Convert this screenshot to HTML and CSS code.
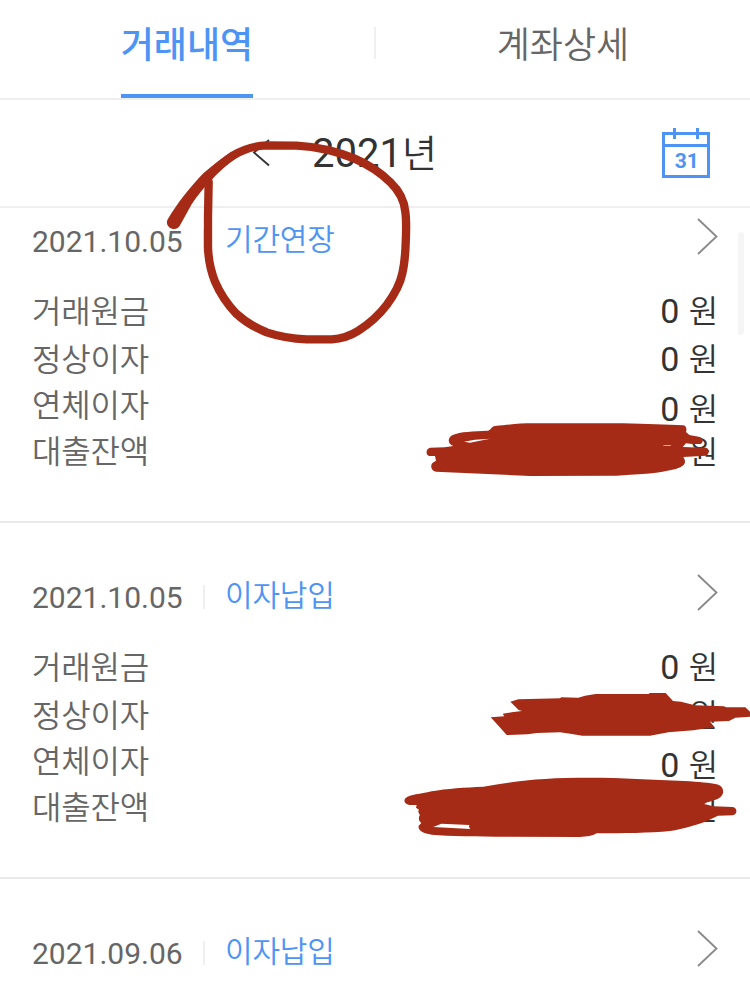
FILE: index.html
```html
<!DOCTYPE html>
<html lang="ko">
<head>
  <meta charset="UTF-8">
  <title>거래내역</title>
  <meta name="viewport" content="width=device-width, initial-scale=1.0">
  <link rel="stylesheet" href="styles.css">
</head>
<body>

  <nav class="tabs">
    <div class="tab"><span class="tab-label active">거래내역</span></div>
    <div class="tab-line"></div>
    <div class="tab"><span class="tab-label">계좌상세</span></div>
  </nav>

  <div class="year-bar">
    <svg class="prev" width="20" height="30" viewBox="0 0 20 30"><path d="M18 2L3 14.5L18 27.5"/></svg>
    <div class="year">2021<span class="year-unit">년</span></div>
    <svg class="calendar" width="48" height="50" viewBox="0 0 48 50">
      <path d="M1.5 5.5H46.5V48.5H1.5ZM1.5 17.5H46.5M12.5 0V11M35.5 0V11"/>
      <text x="24.7" y="40">31</text>
    </svg>
  </div>

  <main class="list">
    <section class="item first">
      <div class="item-head">
        <span class="date">2021.10.05</span>
        <span class="divider"></span>
        <span class="type">기간연장</span>
        <svg class="next" width="22" height="38" viewBox="0 0 22 38"><path d="M2 2L20.5 19.5L2 37"/></svg>
      </div>
      <div class="item-body">
        <div class="labels">
          <span>거래원금</span>
          <span>정상이자</span>
          <span>연체이자</span>
          <span>대출잔액</span>
        </div>
        <div class="amounts">
          <span><b>0</b> 원</span>
          <span><b>0</b> 원</span>
          <span class="low"><b>0</b> 원</span>
          <span>원</span>
        </div>
      </div>
    </section>

    <section class="item">
      <div class="item-head">
        <span class="date">2021.10.05</span>
        <span class="divider"></span>
        <span class="type">이자납입</span>
        <svg class="next" width="22" height="38" viewBox="0 0 22 38"><path d="M2 2L20.5 19.5L2 37"/></svg>
      </div>
      <div class="item-body">
        <div class="labels">
          <span>거래원금</span>
          <span>정상이자</span>
          <span>연체이자</span>
          <span>대출잔액</span>
        </div>
        <div class="amounts">
          <span><b>0</b> 원</span>
          <span>원</span>
          <span class="low"><b>0</b> 원</span>
          <span>원</span>
        </div>
      </div>
    </section>

    <section class="item last">
      <div class="item-head">
        <span class="date">2021.09.06</span>
        <span class="divider"></span>
        <span class="type">이자납입</span>
        <svg class="next" width="22" height="38" viewBox="0 0 22 38"><path d="M2 2L20.5 19.5L2 37"/></svg>
      </div>
    </section>
  </main>

  <div class="scrollbar"></div>

  <!-- red pen marks -->
  <svg class="marks" width="750" height="996" viewBox="0 0 750 996">
    <!-- circle round the first type -->
    <g transform="translate(150 120) scale(.33333)">
      <path class="pen" d="M176 186L174 290V380C175 425 184 457 195 485C207 513 232 553 258 580C286 606 320 625 350 637C380 647 422 656 470 658H545C575 656 600 648 625 632C660 610 688 584 710 555C732 525 750 495 757 460C764 430 766 400 767 370C769 330 770 305 766 276C763 240 748 213 721 187C690 156 655 134 614 116C555 92 500 80 440 77L350 76C310 78 280 88 250 106C225 122 200 144 175 167"/>
      <path d="M52 300C85 245 115 208 160 160C190 134 215 114 244 96L256 117C230 133 205 157 185 180C160 203 142 228 125 253L91 314C87 323 79 328 69 327C55 324 48 313 52 300Z"/>
    </g>
    <g transform="translate(410 400) scale(.33333)">
      <path fill-rule="evenodd" d="M60 143L104 142L130 138C113 133 111 113 128 105C150 94 190 95 233 92C243 91 244 79 255 78C300 73 330 70 370 70L640 70C710 71 770 75 820 76C829 78 831 87 828 96L838 105L866 110C880 111 882 128 871 132L846 132L828 130L818 141L888 143C899 145 899 164 888 167L820 171C823 177 826 181 825 187C823 198 809 204 794 208C745 220 700 223 620 227L360 228L78 215C61 212 59 191 72 186L78 182L75 168L58 168C46 165 47 146 60 143ZM162 125L180 128L240 116L195 119ZM760 136L782 136L782 138L760 137Z"/>
    </g>
    <g transform="translate(390 640) scale(.33333)">
      <path d="M361 185L385 178L510 175L514 172L565 173L585 167L617 162L775 162L780 159L827 159L849 183L873 185L915 196L1002 199L1008 202L1066 202L1080 215V230L1036 233L1017 243L960 245L973 260L970 264L950 265L910 271L835 277L780 287L577 287L541 281L510 277L440 279L413 283L350 285L326 258L302 232L343 229L338 221L365 217L396 213L386 210Z"/>
      <path fill-rule="evenodd" d="M47 474C60 464 90 462 125 454C170 445 225 443 280 440C340 430 400 420 465 417C550 412 660 413 740 417L900 424C940 427 970 430 987 435C1000 441 1003 457 995 467C986 480 960 483 940 491L970 499L1028 501C1043 504 1043 523 1028 526L984 527L957 540C930 553 880 567 840 573C780 579 700 580 620 580C607 588 590 590 570 591L350 590C260 589 180 589 125 584C98 580 83 571 86 557L94 549C86 544 84 532 90 525C84 517 84 511 87 509L78 503L80 495L58 495C42 492 40 481 47 474ZM130 561L154 551L238 555L237 561L241 567Z"/>
    </g>
  </svg>

</body>
</html>
```
FILE: styles.css
```css
body {
  margin: 0;
  height: 996px;
  position: relative;
  overflow: hidden;
  background: #fff;
  color: #666;
  font-family: Roboto, "Noto Sans CJK KR", sans-serif;
}

svg {
  display: block;
}

/* tabs */
.tabs {
  display: flex;
  height: 98px;
  border-bottom: 2px solid #efefef;
}

.tab {
  flex: 1;
  display: flex;
  justify-content: center;
}

.tab-label {
  box-sizing: border-box;
  height: 98px;
  font-size: 36px;
  font-weight: 350;
  line-height: 92px;
}

.tab-label.active {
  color: #4e94f4;
  font-weight: 500;
  border-bottom: 4px solid #4e94f4;
}

.tab-line {
  width: 2px;
  height: 32px;
  margin-top: 27px;
  background: #efefef;
}

/* year */
.year-bar {
  display: flex;
  align-items: flex-start;
  height: 106px;
  padding: 0 40px 0 251px;
  border-bottom: 2px solid #efefef;
}

.prev {
  margin-top: 38px;
  fill: none;
  stroke: #333;
  stroke-width: 1.8;
}

.year {
  margin-left: 41px;
  color: #333;
  font-size: 40px;
  line-height: 108px;
}

.year-unit {
  font-size: 38px;
  font-weight: 350;
}

.calendar {
  margin: 28px 0 0 auto;
  fill: none;
  stroke: #4e94f4;
  stroke-width: 3;
}

.calendar text {
  fill: #4e94f4;
  stroke: none;
  font-size: 21px;
  font-weight: 700;
  text-anchor: middle;
}

/* list */
.list {
  height: 788px;
  overflow: hidden;
}

.item {
  box-sizing: border-box;
  height: 356px;
  padding: 49px 32px 0;
  border-bottom: 2px solid #ebebeb;
}

.item.first {
  height: 315px;
  padding-top: 8px;
}

.item.last {
  height: 117px;
  border-bottom: 0;
}

.item-head {
  display: flex;
  height: 50px;
}

.date {
  width: 171px;
  font-size: 30px;
  line-height: 52px;
}

.divider {
  width: 2px;
  height: 24px;
  margin-top: 13px;
  background: #efefef;
}

.type {
  margin-left: 20px;
  color: #4e94f4;
  font-size: 30px;
  font-weight: 350;
  letter-spacing: -0.2px;
  line-height: 48px;
}

.next {
  margin: 1px 0 0 auto;
  fill: none;
  stroke: #888;
  stroke-width: 1.8;
}

.item-body {
  display: flex;
  justify-content: space-between;
  padding-top: 23px;
  font-size: 32px;
  font-weight: 350;
  letter-spacing: -0.2px;
  line-height: 46px;
}

.labels,
.amounts {
  display: flex;
  flex-direction: column;
}

.labels span:first-child,
.amounts span:first-child {
  margin-bottom: 2px;
}

.amounts {
  align-items: flex-end;
  color: #333;
}

.amounts b {
  margin-right: 2px;
  font-size: 34px;
  font-weight: 400;
  line-height: 40px;
}

.amounts .low {
  margin: 4px 0 -3px;
}

.scrollbar {
  position: absolute;
  top: 232px;
  right: 6px;
  width: 6px;
  height: 103px;
  border-radius: 3px;
  background: #f5f5f5;
}

.marks {
  position: absolute;
  top: 0;
  left: 0;
  fill: #a62b17;
}

.pen {
  fill: none;
  stroke: #a62b17;
  stroke-width: 25;
  stroke-linecap: round;
  stroke-linejoin: round;
}
```
